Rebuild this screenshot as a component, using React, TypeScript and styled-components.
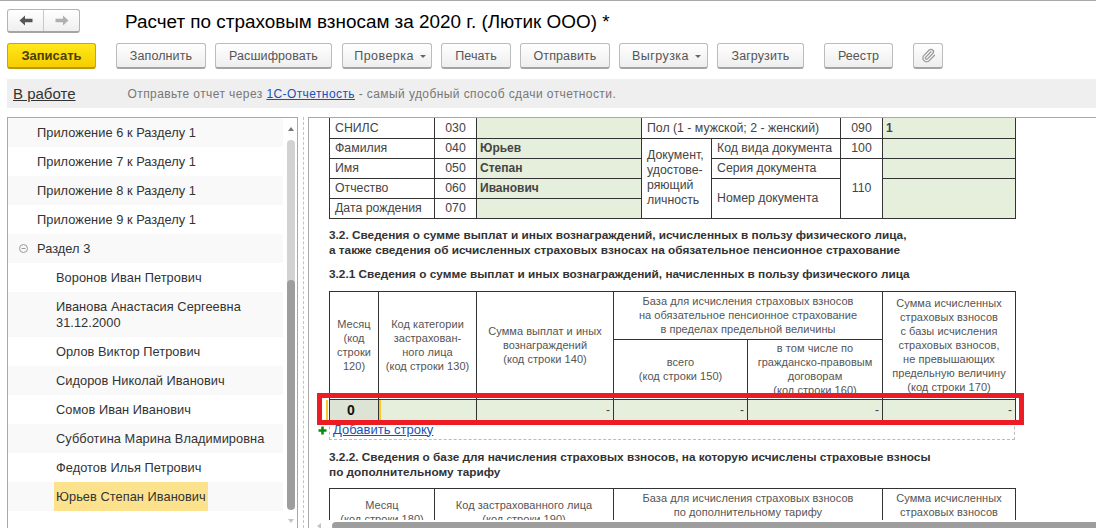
import React from "react";
import styled, { createGlobalStyle } from "styled-components";

const Global = createGlobalStyle`
  html, body { margin: 0; padding: 0; background: #fff; }
  body { font-family: "Liberation Sans", Arial, sans-serif; color: #333; }
  * { box-sizing: border-box; }
`;

const Page = styled.div`
  width: 1096px;
  height: 528px;
  overflow: hidden;
  display: flex;
  flex-direction: column;
  border-top: 1px solid #a8a8a8;
`;

const TitleBar = styled.div`
  height: 41px;
  padding: 8px 0 0 7px;
  display: flex;
  align-items: flex-start;
`;

const NavGroup = styled.div`
  width: 73px;
  height: 24px;
  display: flex;
  border: 1px solid #b4b4b4;
  border-bottom: 2px solid #a4a4a4;
  border-radius: 3px;
  background: linear-gradient(#ffffff, #efefef);
`;

const NavButton = styled.div<{ $divided?: boolean }>`
  flex: 1;
  display: flex;
  align-items: center;
  justify-content: center;
  border-right: ${(p) => (p.$divided ? "1px solid #c8c8c8" : "none")};
`;

const Title = styled.h1`
  margin: 0 0 0 45px;
  font-size: 18.9px;
  line-height: 26px;
  font-weight: 400;
  color: #000;
  white-space: nowrap;
`;

const Toolbar = styled.div`
  height: 37px;
  padding: 1px 0 0 7px;
  display: flex;
  align-items: flex-start;
`;

const Button = styled.div<{ $w: number; $ml?: number }>`
  width: ${(p) => p.$w}px;
  margin-left: ${(p) => p.$ml ?? 9}px;
  height: 26px;
  display: flex;
  align-items: center;
  justify-content: center;
  gap: 6px;
  font-size: 12.5px;
  letter-spacing: 0.1px;
  color: #555;
  border: 1px solid #bcbcbc;
  border-bottom: 2px solid #a4a4a4;
  border-radius: 3px;
  background: linear-gradient(#ffffff, #eeeeee);
  white-space: nowrap;
`;

const MenuButton = styled(Button)`
  padding-left: 6px;
  letter-spacing: 0.45px;
`;

const PrimaryButton = styled(Button)`
  margin-left: 0;
  font-weight: 700;
  font-size: 13px;
  letter-spacing: 0;
  color: #4d4000;
  border: 1px solid #c9a800;
  border-bottom: 2px solid #b89a00;
  background: linear-gradient(#ffe81a, #f6cd00);
`;

const Caret = styled.span`
  width: 0;
  height: 0;
  margin-top: 2px;
  border-left: 3px solid transparent;
  border-right: 3px solid transparent;
  border-top: 3px solid #666;
`;

const InfoBar = styled.div`
  margin-left: 7px;
  height: 29px;
  flex: none;
  display: flex;
  align-items: center;
  padding-left: 6px;
  background: #efefef;
`;

const StatusLink = styled.span`
  font-size: 15px;
  color: #333;
  text-decoration: underline;
`;

const InfoText = styled.span`
  margin-left: 52px;
  font-size: 12px;
  letter-spacing: 0.41px;
  color: #777;
`;

const InfoLink = styled.span`
  color: #1a50b8;
  text-decoration: underline;
`;

const Main = styled.div`
  margin-top: 9px;
  flex: 1;
  min-height: 0;
  display: flex;
  padding-left: 7px;
`;

const TreePanel = styled.div`
  width: 291px;
  height: 420px;
  display: flex;
  border: 1px solid #a8a8a8;
`;

const TreeList = styled.div`
  width: 276px;
  display: flex;
  flex-direction: column;
`;

const TreeRow = styled.div<{ $odd?: boolean; $level: number; $h?: number }>`
  height: ${(p) => p.$h ?? 29}px;
  flex: none;
  display: flex;
  align-items: center;
  padding-left: ${(p) => (p.$level === 2 ? 48 : 29)}px;
  background: ${(p) => (p.$odd ? "#f9f9f9" : "#fff")};
  font-size: 12.8px;
  line-height: 16px;
  letter-spacing: 0.05px;
  color: #333;
  position: relative;
`;

const Selected = styled.span`
  height: 100%;
  width: 154px;
  margin-left: -2px;
  padding-left: 2px;
  display: flex;
  align-items: center;
  background: #fde28e;
  white-space: nowrap;
`;

const Toggle = styled.svg`
  position: absolute;
  left: 11px;
  top: 10px;
`;

const VScroll = styled.div`
  width: 14px;
  padding: 0 0 0 2px;
  display: flex;
  flex-direction: column;
  align-items: center;
`;

const ArrowUp = styled.span`
  margin: 9px 0 9px;
  flex: none;
  width: 0;
  height: 0;
  border-left: 3px solid transparent;
  border-right: 3px solid transparent;
  border-bottom: 4px solid #777;
`;

const ArrowDown = styled.span`
  margin-top: 9px;
  flex: none;
  width: 0;
  height: 0;
  border-left: 3px solid transparent;
  border-right: 3px solid transparent;
  border-top: 4px solid #c4c4c4;
`;

const VTrack = styled.div`
  flex: none;
  width: 8px;
  height: 145px;
  background: #d2d2d2;
  border-radius: 4px 4px 0 0;
`;

const VThumb = styled.div`
  flex: none;
  width: 8px;
  height: 230px;
  margin-top: -5px;
  background: #9e9e9e;
  border-radius: 4px;
`;

const Splitter = styled.div`
  width: 10px;
  position: relative;
  flex: none;
  display: flex;
  justify-content: center;
  &::before {
    content: "";
    border-left: 1px dashed #c4c4c4;
  }
`;

const FormPanel = styled.div`
  flex: 1;
  min-width: 0;
  display: flex;
  flex-direction: column;
  border-top: 1px solid #a8a8a8;
  border-left: 1px solid #a8a8a8;
`;

const FormScroll = styled.div`
  height: 402px;
  flex: none;
  overflow: hidden;
  position: relative;
  padding-left: 20px;
`;

const Grid = styled.table`
  width: 686px;
  table-layout: fixed;
  border-collapse: collapse;
`;

const Col = styled.col<{ $w: number }>`
  width: ${(p) => p.$w}px;
`;

const Row = styled.tr<{ $h: number }>`
  height: ${(p) => p.$h}px;
`;

const Cell = styled.td<{ $green?: boolean; $strong?: boolean; $center?: boolean; $noTop?: boolean }>`
  padding: ${(p) => (p.$noTop ? "1px" : "0")} ${(p) => (p.$strong ? "3px" : "5px")} 0;
  height: inherit;
  border: 1px solid #333;
  ${(p) => p.$noTop && "border-top: none;"}
  font-size: ${(p) => (p.$strong ? "12px" : "12.3px")};
  line-height: 15px;
  color: #444;
  background: ${(p) => (p.$green ? "#e6eedc" : "#fff")};
  font-weight: ${(p) => (p.$strong ? 700 : 400)};
  text-align: ${(p) => (p.$center ? "center" : "left")};
  white-space: nowrap;
`;

const Head = styled.td`
  padding: 0 2px;
  border: 1px solid #333;
  font-size: 11px;
  line-height: 14px;
  letter-spacing: 0.05px;
  color: #555;
  text-align: center;
  vertical-align: middle;
  overflow: hidden;
  background: #fff;
`;

const Value = styled.td`
  padding: 0 3px 0 0;
  border: 1px solid #333;
  background: #e6eedc;
  text-align: right;
  font-size: 12px;
  color: #444;
  vertical-align: middle;
`;

const Current = styled.td`
  position: relative;
  padding: 0 6px 0 0;
  border: 1px solid #333;
  background: #dde4d6;
  text-align: center;
  font-size: 14px;
  font-weight: 700;
  color: #111;
  &::before,
  &::after {
    content: "";
    position: absolute;
    top: 0;
    bottom: 0;
    width: 2px;
    background: #fcc62d;
  }
  &::before {
    left: -4px;
  }
  &::after {
    right: -3px;
  }
`;

const Heading = styled.h3<{ $mt: number; $mb: number }>`
  margin: ${(p) => p.$mt}px 0 ${(p) => p.$mb}px 0;
  font-size: 11.8px;
  line-height: 15px;
  font-weight: 700;
  color: #333;
  white-space: nowrap;
`;

const AddRow = styled.div`
  position: relative;
  width: 686px;
  height: 19px;
  padding-left: 3px;
  font-size: 13px;
  line-height: 18px;
  border: 1px dashed #bbb;
  border-top: none;
  color: #1a50b8;
`;

const AddLink = styled.span`
  text-decoration: underline;
`;

const Plus = styled.svg`
  position: absolute;
  left: -12px;
  top: 5px;
`;

const RedFrame = styled.div`
  position: absolute;
  left: 8px;
  top: 275px;
  width: 707px;
  height: 32px;
  border: 5px solid #ed1c24;
  pointer-events: none;
`;

const HScroll = styled.div`
  flex: 1;
  display: flex;
  align-items: flex-start;
  padding-top: 2px;
  min-height: 0;
`;

const ArrowLeft = styled.span`
  margin: 1px 8px 0 8px;
  flex: none;
  width: 0;
  height: 0;
  border-top: 3px solid transparent;
  border-bottom: 3px solid transparent;
  border-right: 4px solid #c4c4c4;
`;

const HThumb = styled.div`
  flex: 1;
  margin-left: 3px;
  height: 8px;
  background: #9e9e9e;
  border-radius: 4px 0 0 4px;
`;

const treeRows: { t: string; level: number; h?: number; toggle?: boolean }[] = [
  { t: "Приложение 6 к Разделу 1", level: 1 },
  { t: "Приложение 7 к Разделу 1", level: 1 },
  { t: "Приложение 8 к Разделу 1", level: 1 },
  { t: "Приложение 9 к Разделу 1", level: 1 },
  { t: "Раздел 3", level: 1, toggle: true },
  { t: "Воронов Иван Петрович", level: 2 },
  { t: "Иванова Анастасия Сергеевна 31.12.2000", level: 2, h: 45 },
  { t: "Орлов Виктор Петрович", level: 2 },
  { t: "Сидоров Николай Иванович", level: 2 },
  { t: "Сомов Иван Иванович", level: 2 },
  { t: "Субботина Марина Владимировна", level: 2 },
  { t: "Федотов Илья Петрович", level: 2 },
];

const br = (lines: string[]) =>
  lines.map((l, i) => (
    <React.Fragment key={i}>
      {i > 0 && <br />}
      {l}
    </React.Fragment>
  ));

export default function App() {
  return (
    <Page>
      <Global />
      <TitleBar>
        <NavGroup>
          <NavButton $divided>
            <svg width="14" height="11" viewBox="0 0 14 11">
              <path d="M0.5 5.5 L6 0.5 V3.8 H13.5 V7.2 H6 V10.5 Z" fill="#555" />
            </svg>
          </NavButton>
          <NavButton>
            <svg width="14" height="11" viewBox="0 0 14 11">
              <path d="M13.5 5.5 L8 0.5 V3.8 H0.5 V7.2 H8 V10.5 Z" fill="#b0b0b0" />
            </svg>
          </NavButton>
        </NavGroup>
        <Title>Расчет по страховым взносам за 2020 г. (Лютик ООО) *</Title>
      </TitleBar>
      <Toolbar>
        <PrimaryButton $w={89}>Записать</PrimaryButton>
        <Button $w={90} $ml={20}>Заполнить</Button>
        <Button $w={117}>Расшифровать</Button>
        <MenuButton $w={90} $ml={10}>Проверка<Caret /></MenuButton>
        <Button $w={70}>Печать</Button>
        <Button $w={90} $ml={9}>Отправить</Button>
        <MenuButton $w={89}>Выгрузка<Caret /></MenuButton>
        <Button $w={87}>Загрузить</Button>
        <Button $w={69} $ml={20}>Реестр</Button>
        <Button $w={30} $ml={20}>
          <svg width="15" height="15" viewBox="0 0 24 24" fill="none" stroke="#999" strokeWidth="2" strokeLinecap="round" strokeLinejoin="round">
            <path d="m16 6-8.414 8.586a2 2 0 0 0 2.829 2.829l8.414-8.586a4 4 0 1 0-5.657-5.657l-8.379 8.551a6 6 0 1 0 8.485 8.485l8.379-8.551" />
          </svg>
        </Button>
      </Toolbar>
      <InfoBar>
        <StatusLink>В работе</StatusLink>
        <InfoText>
          Отправьте отчет через <InfoLink>1С-Отчетность</InfoLink> - самый удобный способ сдачи отчетности.
        </InfoText>
      </InfoBar>
      <Main>
        <TreePanel>
          <TreeList>
            {treeRows.map((r, i) => (
              <TreeRow key={r.t} $level={r.level} $h={r.h} $odd={i % 2 === 0}>
                {r.toggle && (
                  <Toggle width="9" height="9" viewBox="0 0 9 9">
                    <circle cx="4.5" cy="4.5" r="4" fill="none" stroke="#999" />
                    <path d="M2.5 4.5 H6.5" stroke="#999" />
                  </Toggle>
                )}
                <span>{r.t}</span>
              </TreeRow>
            ))}
            <TreeRow $level={2} $odd>
              <Selected>Юрьев Степан Иванович</Selected>
            </TreeRow>
          </TreeList>
          <VScroll>
            <ArrowUp />
            <VTrack />
            <VThumb />
            <ArrowDown />
          </VScroll>
        </TreePanel>
        <Splitter />
        <FormPanel>
          <FormScroll>
            <Grid>
              <colgroup>
                <Col $w={105} /><Col $w={42} /><Col $w={165} /><Col $w={70} /><Col $w={129} /><Col $w={42} /><Col $w={133} />
              </colgroup>
              <tbody>
                <Row $h={20}>
                  <Cell $noTop>СНИЛС</Cell>
                  <Cell $noTop $center>030</Cell>
                  <Cell $noTop $green />
                  <Cell $noTop colSpan={2}>Пол (1 - мужской; 2 - женский)</Cell>
                  <Cell $noTop $center>090</Cell>
                  <Cell $noTop $green $strong>1</Cell>
                </Row>
                <Row $h={20}>
                  <Cell>Фамилия</Cell>
                  <Cell $center>040</Cell>
                  <Cell $green $strong>Юрьев</Cell>
                  <Cell rowSpan={4}>{br(["Документ,", "удостове-", "ряющий", "личность"])}</Cell>
                  <Cell>Код вида документа</Cell>
                  <Cell $center>100</Cell>
                  <Cell $green />
                </Row>
                <Row $h={20}>
                  <Cell>Имя</Cell>
                  <Cell $center>050</Cell>
                  <Cell $green $strong>Степан</Cell>
                  <Cell>Серия документа</Cell>
                  <Cell $center rowSpan={3}>110</Cell>
                  <Cell $green />
                </Row>
                <Row $h={20}>
                  <Cell>Отчество</Cell>
                  <Cell $center>060</Cell>
                  <Cell $green $strong>Иванович</Cell>
                  <Cell rowSpan={2}>Номер документа</Cell>
                  <Cell $green rowSpan={2} />
                </Row>
                <Row $h={20}>
                  <Cell>Дата рождения</Cell>
                  <Cell $center>070</Cell>
                  <Cell $green />
                </Row>
              </tbody>
            </Grid>
            <Heading $mt={9} $mb={0}>3.2. Сведения о сумме выплат и иных вознаграждений, исчисленных в пользу физического лица,</Heading>
            <Heading $mt={0} $mb={9}>а также сведения об исчисленных страховых взносах на обязательное пенсионное страхование</Heading>
            <Heading $mt={0} $mb={9}>3.2.1 Сведения о сумме выплат и иных вознаграждений, начисленных в пользу физического лица</Heading>
            <Grid>
              <colgroup>
                <Col $w={49} /><Col $w={98} /><Col $w={137} /><Col $w={134} /><Col $w={135} /><Col $w={133} />
              </colgroup>
              <tbody>
                <Row $h={48}>
                  <Head rowSpan={2}>{br(["Месяц", "(код", "строки", "120)"])}</Head>
                  <Head rowSpan={2}>{br(["Код категории", "застрахован-", "ного лица", "(код строки 130)"])}</Head>
                  <Head rowSpan={2}>{br(["Сумма выплат и иных", "вознаграждений", "(код строки 140)"])}</Head>
                  <Head colSpan={2}>{br(["База для исчисления страховых взносов", "на обязательное пенсионное страхование", "в пределах предельной величины"])}</Head>
                  <Head rowSpan={2}>{br(["Сумма исчисленных", "страховых взносов", "с базы исчисления", "страховых взносов,", "не превышающих", "предельную величину", "(код строки 170)"])}</Head>
                </Row>
                <Row $h={60}>
                  <Head>{br(["всего", "(код строки 150)"])}</Head>
                  <Head>{br(["в том числе по", "гражданско-правовым", "договорам", "(код строки 160)"])}</Head>
                </Row>
                <Row $h={21}>
                  <Current>0</Current>
                  <Value />
                  <Value>-</Value>
                  <Value>-</Value>
                  <Value>-</Value>
                  <Value>-</Value>
                </Row>
              </tbody>
            </Grid>
            <AddRow>
              <Plus width="9" height="9" viewBox="0 0 9 9">
                <path d="M3.2 0.5 H5.8 V3.2 H8.5 V5.8 H5.8 V8.5 H3.2 V5.8 H0.5 V3.2 H3.2 Z" fill="#0a8a0a" />
              </Plus>
              <AddLink>Добавить строку</AddLink>
            </AddRow>
            <Heading $mt={10} $mb={0}>3.2.2. Сведения о базе для начисления страховых взносов, на которую исчислены страховые взносы</Heading>
            <Heading $mt={0} $mb={8}>по дополнительному тарифу</Heading>
            <Grid>
              <colgroup>
                <Col $w={105} /><Col $w={179} /><Col $w={269} /><Col $w={133} />
              </colgroup>
              <tbody>
                <Row $h={34}>
                  <Head rowSpan={2}>{br(["Месяц", "(код строки 180)"])}</Head>
                  <Head rowSpan={2}>{br(["Код застрахованного лица", "(код строки 190)"])}</Head>
                  <Head>{br(["База для исчисления страховых взносов", "по дополнительному тарифу"])}</Head>
                  <Head rowSpan={2}>{br(["Сумма исчисленных", "страховых взносов", "с базы исчисления"])}</Head>
                </Row>
                <Row $h={14}>
                  <Head />
                </Row>
              </tbody>
            </Grid>
            <RedFrame />
          </FormScroll>
          <HScroll>
            <ArrowLeft />
            <HThumb />
          </HScroll>
        </FormPanel>
      </Main>
    </Page>
  );
}
